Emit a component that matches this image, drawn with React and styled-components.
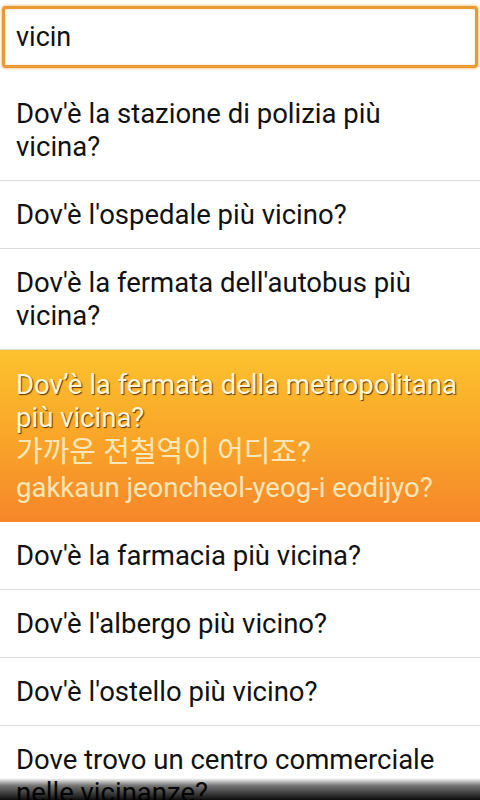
import React from 'react'
import styled, { createGlobalStyle } from 'styled-components'

const Global = createGlobalStyle`
  html, body {
    margin: 0;
    padding: 0;
    background: #fff;
    height: 800px;
    overflow: hidden;
  }
  body {
    font-family: Roboto, "Noto Sans", "Noto Sans CJK KR", sans-serif;
  }
`

const Screen = styled.div`
  position: relative;
  width: 480px;
  height: 800px;
  overflow: hidden;
  background: #fff;
`

const SearchWrap = styled.div`
  padding: 6px 2px 0 2px;
`

const SearchBox = styled.div`
  height: 56px;
  border: 3px solid #e99a35;
  border-radius: 4px;
  box-shadow: 0 0 2px 1px rgba(240, 170, 80, 0.6), inset 0 0 2px rgba(240, 160, 60, 0.5);
  background: #fff;
  display: flex;
  align-items: center;
  padding: 0 11px;
  font-size: 27px;
  color: #111;
`

const List = styled.div`
  margin-top: 12px;
  display: flex;
  flex-direction: column;
`

const Row = styled.div`
  padding: 17px 16px;
  border-bottom: 1px solid #dcdcdc;
  font-size: 27.5px;
  line-height: 33px;
  color: #111;
`

const ActiveRow = styled.div`
  padding: 18px 12px 16px 16px;
  background: linear-gradient(to bottom, #fcc22e 0%, #f9a629 50%, #f6862a 100%);
  font-size: 27.5px;
  line-height: 33px;
`

const Phrase = styled.div`
  color: #fff6d8;
  text-shadow: 1px 1px 1px rgba(60, 30, 0, 0.85);
`

const Translation = styled.div`
  color: #fde7b8;
  line-height: 36px;
  font-size: ${(p) => (p.$korean ? '29px' : '27.5px')};
  font-family: Roboto, "Noto Sans CJK KR", sans-serif;
`

const BottomShade = styled.div`
  position: absolute;
  left: 0;
  right: 0;
  bottom: 0;
  height: 22px;
  background: linear-gradient(to bottom, rgba(0,0,0,0) 0%, rgba(0,0,0,0.55) 35%, rgba(0,0,0,0.95) 100%);
  pointer-events: none;
`

const phrases = [
  "Dov'è la stazione di polizia più vicina?",
  "Dov'è l'ospedale più vicino?",
  "Dov'è la fermata dell'autobus più vicina?",
]

const after = [
  "Dov'è la farmacia più vicina?",
  "Dov'è l'albergo più vicino?",
  "Dov'è l'ostello più vicino?",
  "Dove trovo un centro commerciale nelle vicinanze?",
]

export default function App() {
  return (
    <Screen>
      <Global />
      <SearchWrap>
        <SearchBox>vicin</SearchBox>
      </SearchWrap>
      <List>
        {phrases.map((p) => (
          <Row key={p}>{p}</Row>
        ))}
        <ActiveRow>
          <Phrase>Dov’è la fermata della metropolitana più vicina?</Phrase>
          <Translation $korean>가까운 전철역이 어디죠?</Translation>
          <Translation>gakkaun jeoncheol-yeog-i eodijyo?</Translation>
        </ActiveRow>
        {after.map((p) => (
          <Row key={p}>{p}</Row>
        ))}
      </List>
      <BottomShade />
    </Screen>
  )
}
